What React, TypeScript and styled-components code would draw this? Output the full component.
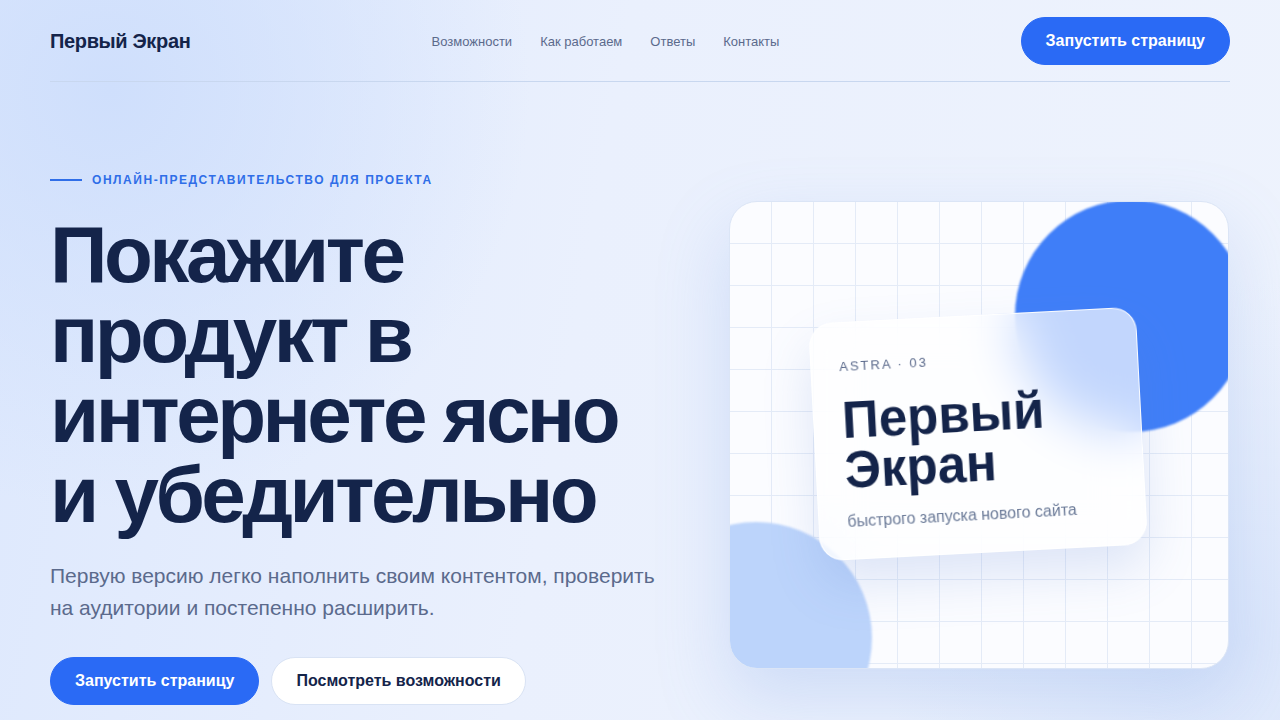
import styled, { createGlobalStyle } from "styled-components";

const GlobalStyle = createGlobalStyle`
  * { box-sizing: border-box; }
  html, body { margin: 0; padding: 0; }
  body {
    font-family: "Liberation Sans", Arial, sans-serif;
    color: #14244a;
    background: #eef3fd;
  }
`;

const Page = styled.div`
  position: relative;
  min-height: 720px;
  overflow: hidden;
  background:
    radial-gradient(circle at 110px 90px, #cfdffc 0, rgba(207, 223, 252, 0) 420px),
    radial-gradient(circle at 1240px 640px, #dbe6fb 0, rgba(219, 230, 251, 0) 360px),
    linear-gradient(100deg, #dde8fd 0%, #eaf0fd 45%, #eef3fd 100%);
`;

const Container = styled.div`
  width: 1180px;
  margin: 0 auto;
`;

const Header = styled.header`
  display: flex;
  align-items: center;
  justify-content: space-between;
  padding: 17px 0 16px;
  border-bottom: 1px solid #c8d7ef;
`;

const Logo = styled.div`
  font-size: 20px;
  font-weight: 700;
  letter-spacing: -0.35px;
  color: #14244a;
`;

const Nav = styled.nav`
  display: flex;
  gap: 28px;
`;

const NavLink = styled.a`
  font-size: 13px;
  color: #5b6a8c;
  text-decoration: none;
`;

const Button = styled.button<{ $variant?: "primary" | "ghost" }>`
  height: 48px;
  padding: 0 24px;
  border-radius: 24px;
  font-family: inherit;
  font-size: 16px;
  font-weight: 700;
  cursor: pointer;
  border: 1px solid ${(p) => (p.$variant === "ghost" ? "#d9e3f4" : "#2a6af5")};
  background: ${(p) => (p.$variant === "ghost" ? "#ffffff" : "#2a6af5")};
  color: ${(p) => (p.$variant === "ghost" ? "#14244a" : "#ffffff")};
`;

const Hero = styled.section`
  display: grid;
  grid-template-columns: 1fr 500px;
  align-items: start;
  padding-top: 90px;
`;

const Copy = styled.div`
  display: flex;
  flex-direction: column;
`;

const Eyebrow = styled.div`
  display: flex;
  align-items: center;
  gap: 10px;
  height: 16px;
  font-size: 12px;
  font-weight: 700;
  letter-spacing: 1.55px;
  text-transform: uppercase;
  color: #2f6ee8;

  &::before {
    content: "";
    width: 32px;
    height: 2px;
    background: #2f6ee8;
  }
`;

const Title = styled.h1`
  margin: 27px 0 0;
  font-size: 80px;
  line-height: 1;
  font-weight: 700;
  letter-spacing: -3.5px;
  color: #14244a;
`;

const Lead = styled.p`
  margin: 25px 0 0;
  font-size: 21px;
  line-height: 32px;
  color: #5b6a8c;
  max-width: 620px;
`;

const Actions = styled.div`
  display: flex;
  gap: 12px;
  margin-top: 33px;
`;

const Visual = styled.div`
  position: relative;
  height: 468px;
  margin: 29px 1px 0 -1px;
  border-radius: 28px;
  overflow: hidden;
  background-color: #fbfcff;
  background-image:
    linear-gradient(to right, #e4ebf7 1px, transparent 1px),
    linear-gradient(to bottom, #e4ebf7 1px, transparent 1px);
  background-size: 42px 42px;
  background-position: 41px 41px;
  border: 1px solid #dbe5f6;
  box-shadow: 0 30px 70px rgba(120, 160, 230, 0.25);
`;

const Blob = styled.div<{ $size: number; $x: number; $y: number; $color: string }>`
  position: absolute;
  left: ${(p) => p.$x}px;
  top: ${(p) => p.$y}px;
  width: ${(p) => p.$size}px;
  height: ${(p) => p.$size}px;
  border-radius: 50%;
  background: ${(p) => p.$color};
  filter: blur(1px);
`;

const Glass = styled.div`
  position: absolute;
  left: 84px;
  top: 113px;
  width: 328px;
  height: 238px;
  padding: 36px 28px;
  border-radius: 24px;
  transform: rotate(-3deg);
  background: rgba(255, 255, 255, 0.68);
  backdrop-filter: blur(26px);
  border: 1px solid rgba(255, 255, 255, 0.9);
  box-shadow: 0 24px 50px rgba(90, 130, 210, 0.18);
`;

const GlassTag = styled.div`
  font-size: 13px;
  letter-spacing: 2px;
  color: #5b6a8c;
`;

const GlassTitle = styled.div`
  margin-top: 22px;
  font-size: 51px;
  line-height: 50px;
  font-weight: 700;
  color: #14244a;
`;

const GlassSub = styled.div`
  margin-top: 17px;
  font-size: 16px;
  color: #6b7a98;
`;

export default function App() {
  return (
    <>
      <GlobalStyle />
      <Page>
        <Container>
          <Header>
            <Logo>Первый Экран</Logo>
            <Nav>
              <NavLink href="#features">Возможности</NavLink>
              <NavLink href="#how">Как работаем</NavLink>
              <NavLink href="#faq">Ответы</NavLink>
              <NavLink href="#contacts">Контакты</NavLink>
            </Nav>
            <Button>Запустить страницу</Button>
          </Header>
          <Hero>
            <Copy>
              <Eyebrow>Онлайн-представительство для проекта</Eyebrow>
              <Title>
                Покажите
                <br />
                продукт в
                <br />
                интернете ясно
                <br />и убедительно
              </Title>
              <Lead>
                Первую версию легко наполнить своим контентом, проверить на аудитории и
                постепенно расширить.
              </Lead>
              <Actions>
                <Button>Запустить страницу</Button>
                <Button $variant="ghost">Посмотреть возможности</Button>
              </Actions>
            </Copy>
            <Visual>
              <Blob $size={232} $x={285} $y={-2} $color="#3f7ef8" />
              <Blob $size={232} $x={-90} $y={320} $color="#bcd4fb" />
              <Glass>
                <GlassTag>ASTRA · 03</GlassTag>
                <GlassTitle>
                  Первый
                  <br />
                  Экран
                </GlassTitle>
                <GlassSub>быстрого запуска нового сайта</GlassSub>
              </Glass>
            </Visual>
          </Hero>
        </Container>
      </Page>
    </>
  );
}
